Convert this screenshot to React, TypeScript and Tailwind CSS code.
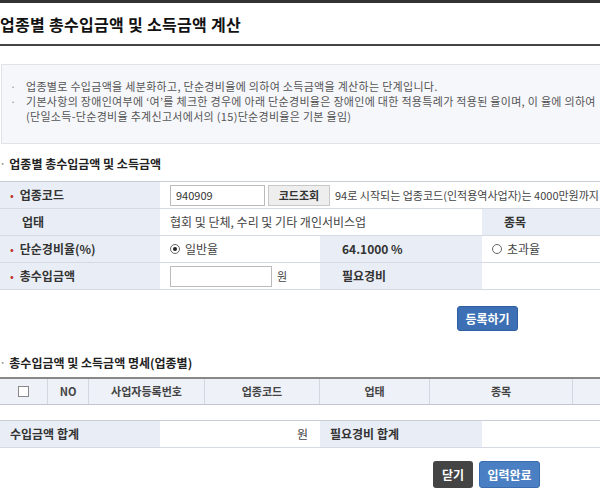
import { useState } from "react";

const font = { fontFamily: '"Noto Sans CJK KR", "Noto Sans", sans-serif' };

function Bullet() {
  return <span className="mr-[6px] text-[10px] leading-none text-[#c0392b]">•</span>;
}

function Radio({ checked }: { checked: boolean }) {
  return (
    <span className="mr-[5px] inline-flex h-[10px] w-[10px] items-center justify-center rounded-full border border-[#666] bg-white">
      {checked ? <span className="h-[4px] w-[4px] rounded-full bg-[#222]" /> : null}
    </span>
  );
}

export default function App() {
  const [code, setCode] = useState("940909");
  const [amount, setAmount] = useState("");
  const [rate, setRate] = useState<"basic" | "excess">("basic");

  const label = "bg-[#e9eef6] border-b border-[#d6dbe3] px-[10px] text-[12px] font-bold text-[#333]";
  const cell = "bg-white border-b border-[#d6dbe3] px-[10px] text-[12px] text-[#444]";

  return (
    <div className="h-[493px] w-[600px] overflow-hidden bg-white text-[#333]" style={font}>
      <div className="w-[760px]">
        <div className="h-[3px] bg-[#333]" />
        <div className="flex h-[43px] items-center border-b-2 border-[#444]">
          <h1 className="text-[16px] font-bold tracking-[0.3px] text-[#111]">업종별 총수입금액 및 소득금액 계산</h1>
        </div>

        <div className="mt-[18px] ml-[1px] border border-[#e0e4ea] bg-[#f5f7fb] px-[8px] pt-[14px] pb-[19px] text-[11px] leading-[15px] tracking-[0.3px] text-[#555]">
          <p className="flex"><span className="w-[16px] text-[#999]">·</span>업종별로 수입금액을 세분화하고, 단순경비율에 의하여 소득금액을 계산하는 단계입니다.</p>
          <p className="flex whitespace-nowrap"><span className="w-[16px] text-[#999]">·</span>기본사항의 장애인여부에 ‘여’를 체크한 경우에 아래 단순경비율은 장애인에 대한 적용특례가 적용된 율이며, 이 율에 의하여</p>
          <p className="pl-[16px]">(단일소득-단순경비율 추계신고서에서의 (15)단순경비율은 기본 율임)</p>
        </div>

        <h2 className="mt-[13px] flex h-[14px] items-center text-[12px] font-bold text-[#222]">
          <span className="mr-[4px] text-[9px] text-[#888]">·</span>업종별 총수입금액 및 소득금액
        </h2>

        <div className="mt-[10px] grid grid-cols-[160px_160px_162px_118px_160px] border-t border-[#c9ced6]">
          <div className={`${label} flex h-[27px] items-center`}><Bullet />업종코드</div>
          <div className={`${cell} col-span-4 flex h-[27px] items-center`}>
            <input
              value={code}
              onChange={(e) => setCode(e.target.value)}
              className="h-[21px] w-[95px] border border-[#bbb] px-[5px] text-[11px] text-[#333] outline-none"
            />
            <button className="ml-[3px] h-[21px] w-[62px] border border-[#c8c8c8] bg-[#eeeeee] text-[11px] font-bold text-[#333]">코드조회</button>
            <span className="ml-[5px] whitespace-nowrap text-[11px] text-[#444]">94로 시작되는 업종코드(인적용역사업자)는 4000만원까지</span>
          </div>

          <div className={`${label} flex h-[27px] items-center pl-[22px]`}>업태</div>
          <div className={`${cell} col-span-2 flex h-[27px] items-center`}>협회 및 단체, 수리 및 기타 개인서비스업</div>
          <div className={`${label} flex h-[27px] items-center pl-[22px]`}>종목</div>
          <div className={`${cell} h-[27px]`} />

          <div className={`${label} flex h-[27px] items-center`}><Bullet />단순경비율(%)</div>
          <label className={`${cell} flex h-[27px] cursor-pointer items-center`} onClick={() => setRate("basic")}>
            <Radio checked={rate === "basic"} />일반율
          </label>
          <div className={`${label} flex h-[27px] items-center pl-[22px]`}>64.1000 %</div>
          <label className={`${cell} col-span-2 flex h-[27px] cursor-pointer items-center`} onClick={() => setRate("excess")}>
            <Radio checked={rate === "excess"} />초과율
          </label>

          <div className={`${label} flex h-[27px] items-center`}><Bullet />총수입금액</div>
          <div className={`${cell} flex h-[27px] items-center`}>
            <input
              value={amount}
              onChange={(e) => setAmount(e.target.value)}
              className="h-[21px] w-[102px] border border-[#bbb] px-[5px] text-[11px] outline-none"
            />
            <span className="ml-[5px] text-[11px]">원</span>
          </div>
          <div className={`${label} flex h-[27px] items-center pl-[22px]`}>필요경비</div>
          <div className={`${cell} col-span-2 h-[27px]`} />
        </div>

        <div className="mt-[16px] flex w-[600px] justify-end pr-[82px]">
          <button className="h-[25px] w-[61px] rounded-[3px] border border-[#2f5e9e] bg-[#3c6fb4] text-[12px] font-bold text-white">등록하기</button>
        </div>

        <h2 className="mt-[25px] flex h-[14px] items-center text-[12px] font-bold text-[#222]">
          <span className="mr-[4px] text-[9px] text-[#888]">·</span>총수입금액 및 소득금액 명세(업종별)
        </h2>

        <div className="mt-[7px] grid h-[28px] grid-cols-[48px_41px_116px_115px_110px_143px_187px] border-t-2 border-b border-t-[#888] border-b-[#c2c7cf] bg-[#eef1f7] text-[11px] font-bold text-[#444]">
          <div className="flex items-center justify-center border-r border-[#d3d8e0]">
            <span className="h-[11px] w-[11px] border border-[#888] bg-white" />
          </div>
          <div className="flex items-center justify-center border-r border-[#d3d8e0]">NO</div>
          <div className="flex items-center justify-center border-r border-[#d3d8e0]">사업자등록번호</div>
          <div className="flex items-center justify-center border-r border-[#d3d8e0]">업종코드</div>
          <div className="flex items-center justify-center border-r border-[#d3d8e0]">업태</div>
          <div className="flex items-center justify-center border-r border-[#d3d8e0]">종목</div>
          <div />
        </div>

        <div className="mt-[15px] grid grid-cols-[160px_160px_162px_278px] border-t border-[#c9ced6]">
          <div className={`${label} flex h-[27px] items-center`}>수입금액 합계</div>
          <div className={`${cell} flex h-[27px] items-center justify-end pr-[12px] text-[11px]`}>원</div>
          <div className={`${label} flex h-[27px] items-center`}>필요경비 합계</div>
          <div className={`${cell} h-[27px]`} />
        </div>

        <div className="mt-[13px] flex w-[600px] justify-end gap-[6px] pr-[60px]">
          <button className="h-[27px] w-[40px] rounded-[3px] bg-[#444] text-[12px] font-bold text-white">닫기</button>
          <button className="h-[27px] w-[61px] rounded-[3px] border border-[#3a6cae] bg-[#4a7fc3] text-[12px] font-bold text-white">입력완료</button>
        </div>
      </div>
    </div>
  );
}
